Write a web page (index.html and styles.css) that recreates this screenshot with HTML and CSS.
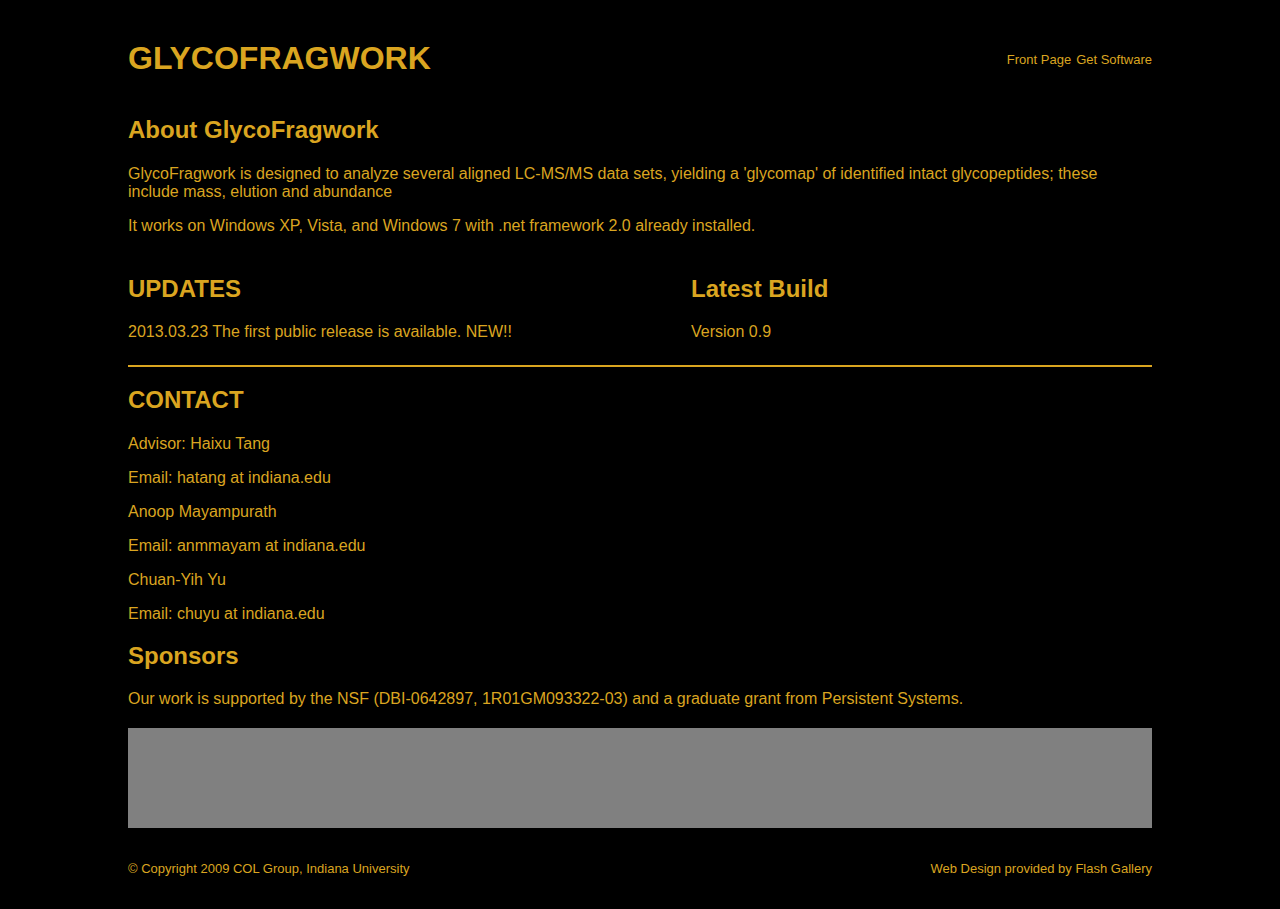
FILE: index.html
```html
<!DOCTYPE html>
<html>
<head>
<meta charset="utf-8">
<title>GlycoFragwork</title>
<link rel="stylesheet" href="styles.css">
</head>
<body>
<div class="page">
  <header class="header">
    <h1 class="logo">GLYCOFRAGWORK</h1>
    <nav class="nav"><a href="#">Front Page</a><a href="#">Get Software</a></nav>
  </header>

  <section class="about">
    <h2 class="h2">About GlycoFragwork</h2>
    <p class="p">GlycoFragwork is designed to analyze several aligned LC-MS/MS data sets, yielding a 'glycomap' of identified intact glycopeptides; these include mass, elution and abundance</p>
    <p class="p">It works on Windows XP, Vista, and Windows 7 with .net framework 2.0 already installed.</p>
  </section>

  <div class="cols">
    <div class="col">
      <h2 class="h2">UPDATES</h2>
      <p class="p">2013.03.23 The first public release is available. NEW!!</p>
    </div>
    <div class="col">
      <h2 class="h2">Latest Build</h2>
      <p class="p">Version 0.9</p>
    </div>
  </div>

  <hr class="rule">

  <section class="contact">
    <h2 class="h2">CONTACT</h2>
    <p class="p">Advisor: Haixu Tang</p>
    <p class="p">Email: hatang at indiana.edu</p>
    <p class="p">Anoop Mayampurath</p>
    <p class="p">Email: anmmayam at indiana.edu</p>
    <p class="p">Chuan-Yih Yu</p>
    <p class="p">Email: chuyu at indiana.edu</p>
  </section>

  <section class="sponsors">
    <h2 class="h2">Sponsors</h2>
    <p class="p">Our work is supported by the NSF (DBI-0642897, 1R01GM093322-03) and a graduate grant from Persistent Systems.</p>
  </section>

  <div class="banner"></div>

  <footer class="footer">
    <span>© Copyright 2009 COL Group, Indiana University</span>
    <span>Web Design provided by Flash Gallery</span>
  </footer>
</div>
</body>
</html>
```

FILE: styles.css
```css
html, body {
  margin: 0;
  padding: 0;
  background: #000;
}
body {
  color: #daa520;
  font-family: "Liberation Sans", Arial, sans-serif;
  font-size: 16px;
}
.page {
  width: 1024px;
  margin: 0 auto;
  padding-top: 38px;
}
.header {
  display: flex;
  justify-content: space-between;
  align-items: center;
}
.logo {
  margin: 0;
  font-size: 32px;
  line-height: 40px;
  font-weight: bold;
}
.nav {
  display: flex;
  gap: 5px;
  font-size: 13px;
  padding-top: 2px;
}
.nav a {
  color: #daa520;
  text-decoration: none;
}
.about {
  margin-top: 38px;
}
.h2 {
  margin: 0 0 20px;
  font-size: 24px;
  line-height: 28px;
  font-weight: bold;
}
.about .h2,
.contact .h2 {
  margin-bottom: 21px;
}
.p {
  margin: 0 0 16px;
  line-height: 18px;
}
.cols {
  display: grid;
  grid-template-columns: 563px 1fr;
  margin-top: 40px;
}
.cols .p {
  margin-bottom: 0;
}
.rule {
  border: 0;
  height: 2px;
  background: #daa520;
  margin: 24px 0 19px;
}
.contact .p:last-child {
  margin-bottom: 19px;
}
.sponsors .p {
  margin-bottom: 20px;
}
.banner {
  height: 100px;
  background: #808080;
}
.footer {
  display: flex;
  justify-content: space-between;
  font-size: 13px;
  margin-top: 33px;
  padding-bottom: 34px;
}
```
